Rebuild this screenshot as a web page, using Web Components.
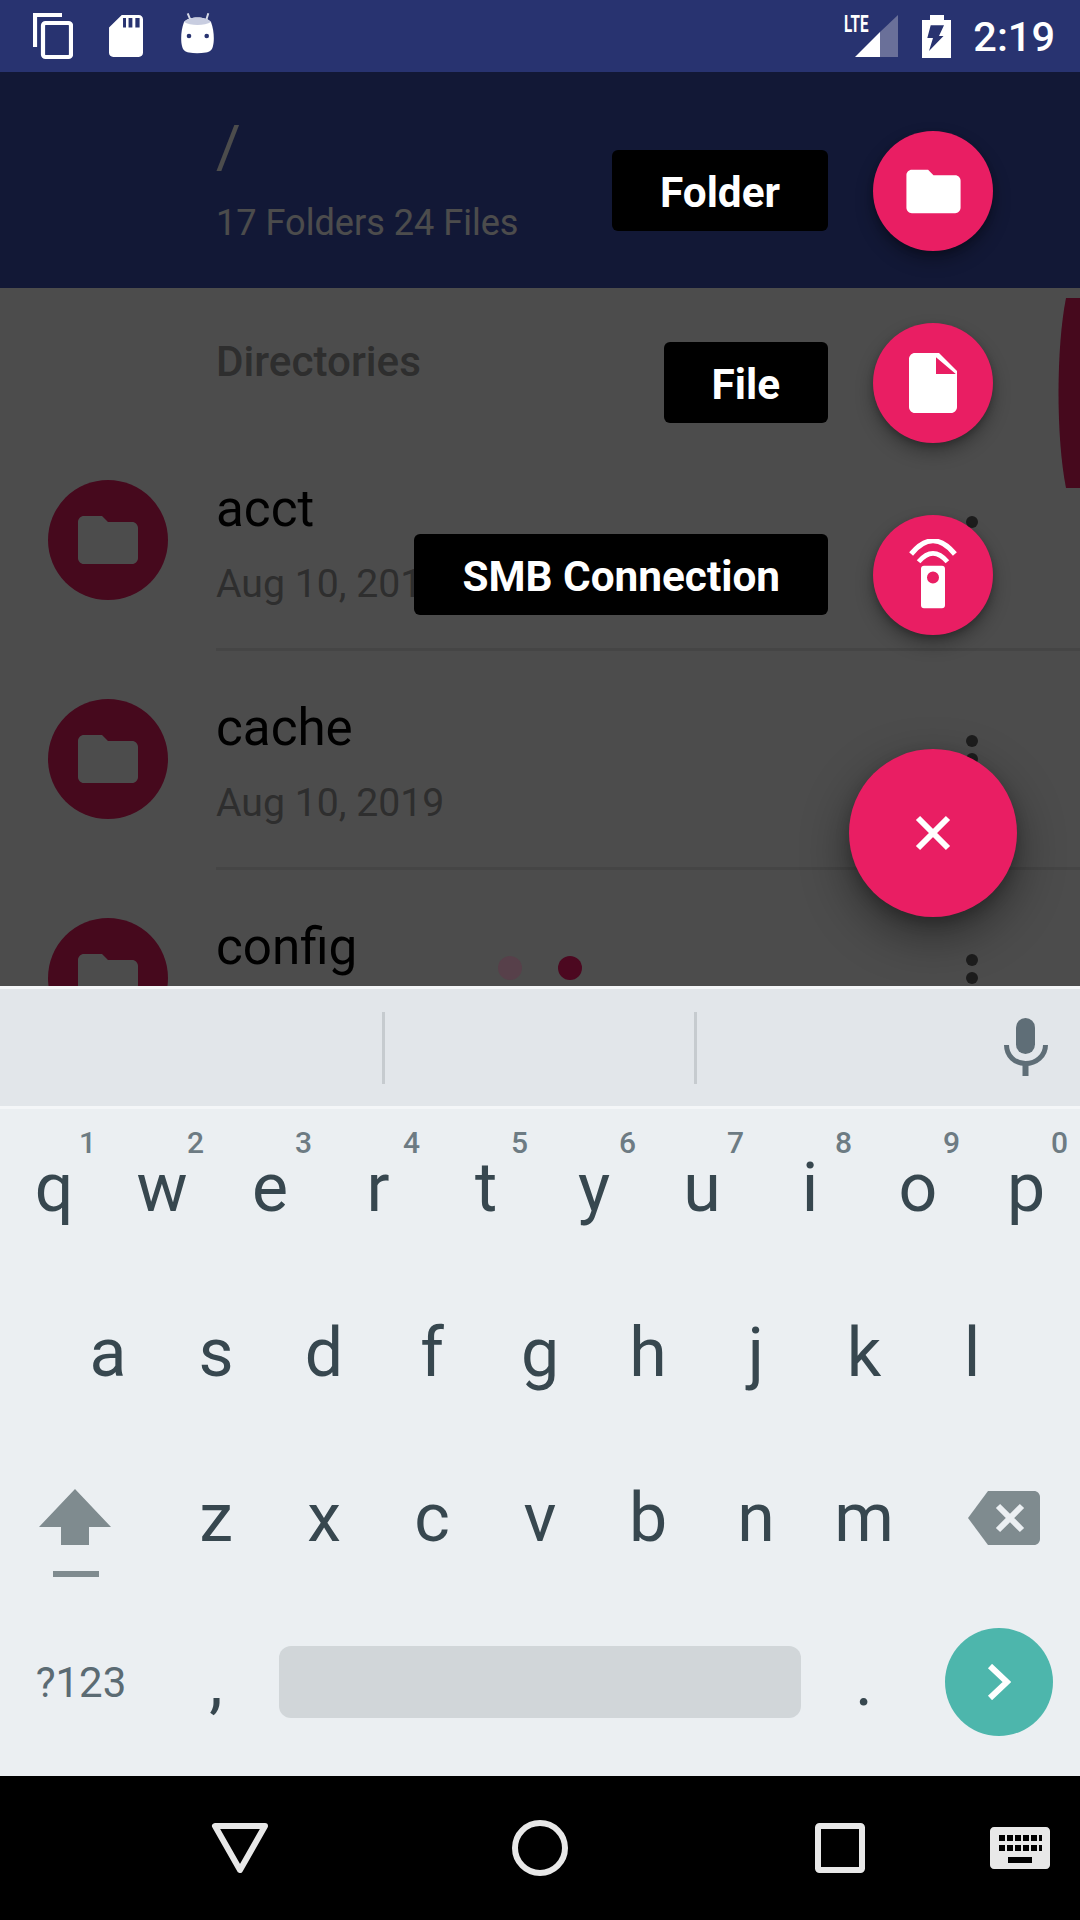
<!DOCTYPE html>
<html>
<head>
<meta charset="utf-8">
<title>Files</title>
<style>
    html, body { margin: 0; padding: 0; }
    body { width: 1080px; height: 1920px; overflow: hidden; font-family: Roboto, "Liberation Sans", sans-serif; }
</style>
</head>
<body>
<phone-screen></phone-screen>

<script>
const ICONS = {
    folder: `<path d="M10 4H4c-1.1 0-2 .9-2 2v12c0 1.1.9 2 2 2h16c1.1 0 2-.9 2-2V8c0-1.1-.9-2-2-2h-8l-2-2z"/>`,
    file: `<path fill-rule="evenodd" d="M6 2c-1.100 0-2 .9-2 2v16c0 1.100.9 2 2 2h12c1.100 0 2-.9 2-2V8l-6-6H6zm7 7V3.400L19.600 9H13z"/>`,
    remote: `<path fill-rule="evenodd" d="M9 8.900h6c.6 0 1 .4 1 1v12.200c0 .6-.4 1-1 1H9c-.6 0-1-.4-1-1V9.900c0-.6.4-1 1-1zM12 10.800a2 2 0 1 0 0 4 2 2 0 0 0 0-4z"/>
        <path fill="none" stroke="#fff" stroke-width="1.700" d="M4.700 5Q12-3.800 19.300 5"/>
        <path fill="none" stroke="#fff" stroke-width="1.600" d="M7.200 7.600Q12 2 16.800 7.600"/>`,
    close: `<path fill="none" stroke="#fff" stroke-width="2" d="M7 7 17 17M17 7 7 17"/>`
}

class StatusBar extends HTMLElement {
    constructor() {
        super()
        this.attachShadow({ mode: "open" })
    }

    connectedCallback() {
        this.shadowRoot.innerHTML = `
            <style>
                :host {
                    display: flex;
                    align-items: center;
                    height: 72px;
                    background: #283370;
                    color: #fff;
                    box-sizing: border-box;
                    padding: 0 25px 0 33px;
                    flex: none;
                }
                svg { display: block; flex: none; }
                .left { display: flex; align-items: center; }
                .right { margin-left: auto; display: flex; align-items: center; }
                .time { font: 500 41.500px Roboto, sans-serif; margin-left: 22px; line-height: 72px; padding-top: 2px; }
                .signal { position: relative; width: 54px; height: 44px; }
                .lte {
                    position: absolute;
                    left: 0;
                    top: -1px;
                    font: 700 23px/23px Roboto, sans-serif;
                    transform: scaleX(.66);
                    transform-origin: left top;
                }
            </style>
            <div class="left">
                <svg width="40" height="48" viewBox="0 0 40 48">
                    <path fill="none" stroke="#fff" stroke-width="4.200" d="M29 3H2v32"/>
                    <rect x="10" y="11" width="28" height="34" rx="2.500" fill="none" stroke="#fff" stroke-width="4.200"/>
                </svg>
                <svg style="margin-left:36px" width="34" height="42" viewBox="4 2 16 20" preserveAspectRatio="none">
                    <path fill="#fff" d="M18 2h-8L4.020 8 4 20c0 1.100.9 2 2 2h12c1.100 0 2-.9 2-2V4c0-1.100-.9-2-2-2zm-6 6h-1.400V3.400H12V8zm3 0h-1.800V3.400H15V8zm3.400 0h-2V3.400h2V8z"/>
                </svg>
                <svg style="margin:-6px 0 0 38px" width="33" height="42" viewBox="0 0 33 42">
                    <path d="M9.700 8.700 6.700 1.300M25 8.700l2.300-7.400" stroke="#d5d9e6" stroke-width="2" fill="none"/>
                    <path fill="#fff" d="M3 10C8 4 25 4 30 10c3 8 3.500 18 2 24-1 4-3 6-7 6.500-6 1-12 1-17 0-4-.5-6-2.500-7-6.500C-.5 28 0 18 3 10z"/>
                    <path fill="#c8cde0" d="M3 10C8 4 25 4 30 10c-6 4-21 4-27 0z"/>
                    <circle cx="8" cy="24" r="2.300" fill="#283370"/>
                    <circle cx="25.700" cy="24" r="2.300" fill="#283370"/>
                </svg>
            </div>
            <div class="right">
                <div class="signal">
                    <svg width="54" height="44" viewBox="0 0 54 44">
                        <path fill="#fff" d="M11 43 36 18v25z"/>
                        <path fill="#6a7099" d="M36 18 54 1v42H36z"/>
                    </svg>
                    <span class="lte">LTE</span>
                </div>
                <svg style="margin-left:24px" width="29" height="43" viewBox="0 0 29 43">
                    <path fill="#fff" fill-rule="evenodd" d="M8 0h14v5h7v38H0V5h8zM8.700 10.300 5.300 23H11L7 36l14.500-15H17l5-10.700z"/>
                </svg>
                <span class="time"><slot></slot></span>
            </div>
        `
    }
}

class AppToolbar extends HTMLElement {
    constructor() {
        super()
        this.attachShadow({ mode: "open" })
    }

    connectedCallback() {
        this.shadowRoot.innerHTML = `
            <style>
                :host {
                    display: block;
                    height: 216px;
                    background: #3f51b5;
                    color: #fff;
                    box-sizing: border-box;
                    padding: 43px 0 0 216px;
                    font-family: Roboto, sans-serif;
                }
                .path { font-size: 60px; line-height: 64px; }
                .count { font-size: 36.100px; line-height: 44px; margin-top: 22px; }
            </style>
            <div class="path">${this.getAttribute("path")}</div>
            <div class="count">${this.getAttribute("count")}</div>
        `
    }
}

class FileRow extends HTMLElement {
    constructor() {
        super()
        this.attachShadow({ mode: "open" })
    }

    connectedCallback() {
        const date = this.getAttribute("date")
        this.shadowRoot.innerHTML = `
            <style>
                :host {
                    display: block;
                    position: relative;
                    height: 219px;
                    font-family: Roboto, sans-serif;
                }
                .row { display: flex; height: 100%; box-sizing: border-box; padding-top: 48px; }
                .avatar {
                    width: 120px;
                    height: 120px;
                    margin-left: 48px;
                    border-radius: 50%;
                    background: #e91e63;
                    display: flex;
                    align-items: center;
                    justify-content: center;
                    flex: none;
                }
                .avatar svg { width: 72px; height: 72px; fill: #fff; }
                .body {
                    flex: 1;
                    margin-left: 48px;
                    border-bottom: 3px solid #e6e6e6;
                    margin-top: -48px;
                    padding-top: 47px;
                    display: flex;
                    position: relative;
                }
                .name { font-size: 51.200px; line-height: 60px; color: #000; }
                .date { font-size: 39.200px; line-height: 46px; color: #999; margin-top: 22px; }
                .more { position: absolute; left: 750px; top: 84px; display: flex; flex-direction: column; gap: 6px; }
                .more i { width: 12px; height: 12px; border-radius: 50%; background: #616161; }
            </style>
            <div class="row">
                <div class="avatar"><svg viewBox="0 0 24 24">${ICONS.folder}</svg></div>
                <div class="body">
                    <div>
                        <div class="name"><slot></slot></div>
                        ${date ? `<div class="date">${date}</div>` : ""}
                    </div>
                    <div class="more"><i></i><i></i><i></i></div>
                </div>
            </div>
        `
    }
}

class FabAction extends HTMLElement {
    constructor() {
        super()
        this.attachShadow({ mode: "open" })
    }

    connectedCallback() {
        const icon = this.getAttribute("icon")
        this.shadowRoot.innerHTML = `
            <style>
                :host {
                    display: flex;
                    align-items: center;
                    justify-content: flex-end;
                    gap: 45px;
                    height: 120px;
                    font-family: Roboto, sans-serif;
                }
                .label {
                    height: 81px;
                    margin-top: -2px;
                    box-sizing: border-box;
                    padding: 0 48px;
                    background: #000;
                    color: #fff;
                    border-radius: 6px;
                    font-size: 42.300px;
                    font-weight: 700;
                    line-height: 86px;
                }
                .fab {
                    width: 120px;
                    height: 120px;
                    border-radius: 50%;
                    background: #e91e63;
                    display: flex;
                    align-items: center;
                    justify-content: center;
                    box-shadow: 0 9px 18px rgba(0,0,0,.3), 0 3px 6px rgba(0,0,0,.2);
                }
                svg { width: ${icon === "folder" ? 65 : 72}px; height: ${icon === "folder" ? 65 : 72}px; fill: #fff; }
            </style>
            <div class="label"><slot></slot></div>
            <div class="fab"><svg viewBox="0 0 24 24">${ICONS[icon]}</svg></div>
        `
    }
}

class FabMenu extends HTMLElement {
    constructor() {
        super()
        this.attachShadow({ mode: "open" })
    }

    connectedCallback() {
        this.shadowRoot.innerHTML = `
            <style>
                :host {
                    position: absolute;
                    inset: 0;
                    display: flex;
                    flex-direction: column;
                    align-items: flex-end;
                    gap: 72px;
                    box-sizing: border-box;
                    padding: 59px 63px 0 0;
                }
                ::slotted(fab-action) { margin-right: 24px; }
                .main {
                    width: 168px;
                    height: 168px;
                    margin-top: 42px;
                    border-radius: 50%;
                    background: #e91e63;
                    display: flex;
                    align-items: center;
                    justify-content: center;
                    box-shadow: 0 18px 48px rgba(0,0,0,.42), 0 6px 14px rgba(0,0,0,.2);
                }
                svg { width: 72px; height: 72px; }
            </style>
            <slot></slot>
            <div class="main"><svg viewBox="0 0 24 24">${ICONS.close}</svg></div>
        `
    }
}

class KeyCap extends HTMLElement {
    constructor() {
        super()
        this.attachShadow({ mode: "open" })
    }

    connectedCallback() {
        const hint = this.getAttribute("hint")
        this.shadowRoot.innerHTML = `
            <style>
                :host {
                    display: flex;
                    position: relative;
                    align-items: center;
                    justify-content: center;
                    height: 164.700px;
                    font: 400 68px Roboto, sans-serif;
                    color: #37474f;
                    line-height: 1;
                }
                .hint {
                    position: absolute;
                    top: 22px;
                    right: 12px;
                    font-size: 30px;
                    font-weight: 500;
                    color: #6d7b83;
                }
            </style>
            <slot></slot>
            ${hint ? `<span class="hint">${hint}</span>` : ""}
        `
    }
}

class SoftKeyboard extends HTMLElement {
    constructor() {
        super()
        this.attachShadow({ mode: "open" })
    }

    keys(letters, hints) {
        return [...letters].map((l, i) => `<key-cap ${hints ? `hint="${hints[i]}"` : ""}>${l}</key-cap>`).join("")
    }

    connectedCallback() {
        this.shadowRoot.innerHTML = `
            <style>
                :host {
                    display: block;
                    height: 790px;
                    flex: none;
                    background: #ebeff2;
                    font-family: Roboto, sans-serif;
                    border-top: 3px solid #f4f6f8;
                    box-sizing: border-box;
                }
                .strip {
                    height: 120px;
                    background: #e2e6ea;
                    border-bottom: 3px solid #f4f6f8;
                    box-sizing: border-box;
                    position: relative;
                }
                .sep { width: 3px; height: 72px; background: #c6cbcf; position: absolute; top: 23px; }
                .mic { position: absolute; left: 1004px; top: 29px; }
                .keys { margin-top: -3px; }
                .row { display: grid; height: 164.700px; }
                .r1 { grid-template-columns: repeat(10, 108px); }
                .r2 { grid-template-columns: repeat(9, 108px); padding-left: 54px; }
                .r3 { grid-template-columns: 162px repeat(7, 108px) 162px; }
                .r4 { grid-template-columns: 162px 108px 540px 108px 162px; }
                .fn { display: flex; align-items: center; justify-content: center; }
                .sym { font-size: 42px; color: #5b6b73; }
                .space { height: 72px; margin: 0 9px; background: #d1d6d9; border-radius: 12px; align-self: center; }
                .enter {
                    width: 108px;
                    height: 108px;
                    border-radius: 50%;
                    background: #4db6ac;
                    display: flex;
                    align-items: center;
                    justify-content: center;
                }
            </style>
            <div class="strip">
                <div class="sep" style="left:382px"></div>
                <div class="sep" style="left:694px"></div>
                <svg class="mic" width="44" height="58" viewBox="0 0 44 58">
                    <rect x="12" y="0" width="19" height="36" rx="9.500" fill="#5f6e77"/>
                    <path d="M2.500 27c0 11 8.500 18.500 19 18.500S41.500 38 41.500 27" fill="none" stroke="#5f6e77" stroke-width="5"/>
                    <rect x="18.500" y="45" width="6" height="13" fill="#5f6e77"/>
                </svg>
            </div>
            <div class="keys">
                <div class="row r1">${this.keys("qwertyuiop", "1234567890")}</div>
                <div class="row r2">${this.keys("asdfghjkl")}</div>
                <div class="row r3">
                    <div class="fn" style="padding:30px 12px 0 0">
                        <svg width="72" height="88" viewBox="0 0 72 88">
                            <path fill="#7f8b8f" d="M36 0 72 38H50v18H22V38H0z"/>
                            <rect x="14" y="82" width="46" height="6" fill="#7f8b8f"/>
                        </svg>
                    </div>
                    ${this.keys("zxcvbnm")}
                    <div class="fn" style="padding-left:10px">
                        <svg width="72" height="54" viewBox="0 0 72 54">
                            <path fill="#7f8b8f" d="M20 0h46c3.300 0 6 2.700 6 6v42c0 3.300-2.700 6-6 6H20L0 27z"/>
                            <path fill="none" stroke="#ebeff2" stroke-width="6" d="M30 15l24 24M54 15 30 39"/>
                        </svg>
                    </div>
                </div>
                <div class="row r4">
                    <div class="fn sym">?123</div>
                    <key-cap>,</key-cap>
                    <div class="space"></div>
                    <key-cap>.</key-cap>
                    <div class="fn">
                        <div class="enter">
                            <svg width="24" height="36" viewBox="0 0 24 36">
                                <path fill="none" stroke="#fff" stroke-width="6" d="M3 2l17 16L3 34"/>
                            </svg>
                        </div>
                    </div>
                </div>
            </div>
        `
    }
}

class NavBar extends HTMLElement {
    constructor() {
        super()
        this.attachShadow({ mode: "open" })
    }

    connectedCallback() {
        this.shadowRoot.innerHTML = `
            <style>
                :host {
                    display: grid;
                    grid-template-columns: 90px 300px 300px 300px 1fr;
                    align-items: center;
                    justify-items: center;
                    height: 144px;
                    background: #000;
                    flex: none;
                }
                svg { display: block; }
            </style>
            <svg style="grid-column:2" width="58" height="50" viewBox="0 0 58 50">
                <path fill="none" stroke="#e8e8e8" stroke-width="6" stroke-linejoin="round" d="M4 3h50L29 47z"/>
            </svg>
            <svg width="56" height="56" viewBox="0 0 56 56">
                <circle cx="28" cy="28" r="25" fill="none" stroke="#e8e8e8" stroke-width="6"/>
            </svg>
            <svg width="50" height="50" viewBox="0 0 50 50">
                <rect x="3" y="3" width="44" height="44" rx="1.500" fill="none" stroke="#e8e8e8" stroke-width="6"/>
            </svg>
            <svg style="margin-right:30px" width="60" height="42" viewBox="0 0 60 42">
                <path fill="#e8e8e8" d="M4 0h52c2.200 0 4 1.800 4 4v34c0 2.200-1.800 4-4 4H4c-2.200 0-4-1.800-4-4V4c0-2.200 1.800-4 4-4z"/>
                <g fill="#000">
                    <path d="M9 8h6v6H9zM17 8h6v6h-6zM25 8h6v6h-6zM33 8h6v6h-6zM41 8h6v6h-6zM49 8h3v6h-3z"/>
                    <path d="M9 18h6v6H9zM17 18h6v6h-6zM25 18h6v6h-6zM33 18h6v6h-6zM41 18h6v6h-6zM49 18h3v6h-3z"/>
                    <path d="M18 30h24v6H18z"/>
                </g>
            </svg>
        `
    }
}

class PhoneScreen extends HTMLElement {
    constructor() {
        super()
        this.attachShadow({ mode: "open" })
    }

    connectedCallback() {
        this.shadowRoot.innerHTML = `
            <style>
                :host {
                    display: flex;
                    flex-direction: column;
                    width: 1080px;
                    height: 1920px;
                    font-family: Roboto, "Liberation Sans", sans-serif;
                }
                main { flex: 1; position: relative; overflow: hidden; background: #fff; }
                .heading {
                    font-size: 42.200px;
                    font-weight: 500;
                    line-height: 50px;
                    color: #999;
                    padding: 49px 0 0 216px;
                    height: 144px;
                    box-sizing: border-box;
                }
                .handle { position: absolute; right: 0; top: 226px; display: block; }
                .scrim { position: absolute; inset: 0; background: rgba(0,0,0,.7); }
                .pager {
                    position: absolute;
                    left: 498px;
                    top: 884px;
                    display: flex;
                    gap: 36px;
                }
                .pager i { width: 24px; height: 24px; border-radius: 50%; background: #57404a; }
                .pager i + i { background: #4c0820; }
            </style>
            <status-bar>2:19</status-bar>
            <main>
                <app-toolbar path="/" count="17 Folders 24 Files"></app-toolbar>
                <div class="heading">Directories</div>
                <file-row date="Aug 10, 2019">acct</file-row>
                <file-row date="Aug 10, 2019">cache</file-row>
                <file-row>config</file-row>
                <svg class="handle" width="22" height="190" viewBox="0 0 22 190">
                    <path fill="#e91e63" d="M22 0H8C-2 50-2 140 8 190h14z"/>
                </svg>
                <div class="scrim"></div>
                <div class="pager"><i></i><i></i></div>
                <fab-menu>
                    <fab-action icon="folder">Folder</fab-action>
                    <fab-action icon="file">File</fab-action>
                    <fab-action icon="remote">SMB Connection</fab-action>
                </fab-menu>
            </main>
            <soft-keyboard></soft-keyboard>
            <nav-bar></nav-bar>
        `
    }
}

customElements.define("status-bar", StatusBar)
customElements.define("app-toolbar", AppToolbar)
customElements.define("file-row", FileRow)
customElements.define("fab-action", FabAction)
customElements.define("fab-menu", FabMenu)
customElements.define("key-cap", KeyCap)
customElements.define("soft-keyboard", SoftKeyboard)
customElements.define("nav-bar", NavBar)
customElements.define("phone-screen", PhoneScreen)
</script>
</body>
</html>
